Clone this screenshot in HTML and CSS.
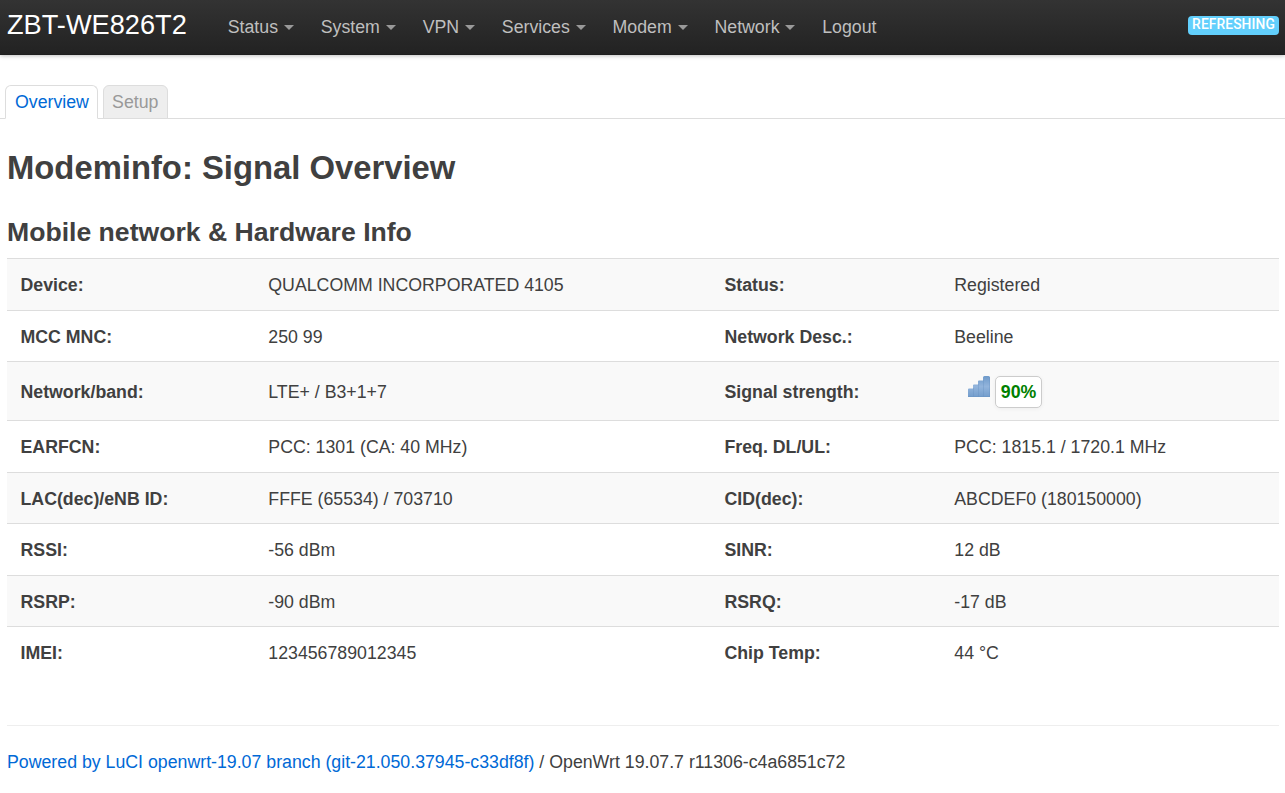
FILE: index.html
```html
<!DOCTYPE html>
<html lang="en">
<head>
<meta charset="utf-8">
<title>ZBT-WE826T2 - Modeminfo</title>
<link rel="stylesheet" href="styles.css">
</head>
<body>
<header class="topbar">
  <a class="brand">ZBT-WE826T2</a>
  <nav class="nav">
    <a class="menu">Status</a>
    <a class="menu">System</a>
    <a class="menu">VPN</a>
    <a class="menu">Services</a>
    <a class="menu">Modem</a>
    <a class="menu">Network</a>
    <a>Logout</a>
  </nav>
  <span class="label">REFRESHING</span>
</header>
<ul class="tabs">
  <li class="tab active">Overview</li>
  <li class="tab">Setup</li>
</ul>
<main class="content">
  <h2>Modeminfo: Signal Overview</h2>
  <h3>Mobile network &amp; Hardware Info</h3>
  <div class="table">
    <div class="row"><b>Device:</b><span>QUALCOMM INCORPORATED 4105</span><b>Status:</b><span>Registered</span></div>
    <div class="row short"><b>MCC MNC:</b><span>250 99</span><b>Network Desc.:</b><span>Beeline</span></div>
    <div class="row tall"><b>Network/band:</b><span>LTE+ / B3+1+7</span><b>Signal strength:</b>
      <span class="signal">
        <svg class="bars" width="22" height="21" viewBox="0 0 22 21">
          <defs><linearGradient id="bar" x1="0" y1="0" x2="0" y2="1"><stop offset="0" stop-color="#6f9aca"/><stop offset=".5" stop-color="#92b4dc"/><stop offset="1" stop-color="#739dcc"/></linearGradient></defs>
          <path d="M0 21V13.500Q0 12.500 1 12.500H5V9.500Q5 8.500 6 8.500H10V5.500Q10 4.500 11 4.500H15V1.500Q15 0 16.500 0H20.500Q22 0 22 1.500V21Z" fill="url(#bar)"/>
          <path d="M5.500 12V20.500M10.500 8V20.500M15.500 4V20.500M21.500 1V20.500M0 20.500H22" stroke="#5f8bbd" stroke-opacity=".3" fill="none"/>
        </svg>
        <strong class="badge">90%</strong>
      </span></div>
    <div class="row"><b>EARFCN:</b><span>PCC: 1301 (CA: 40 MHz)</span><b>Freq. DL/UL:</b><span>PCC: 1815.1 / 1720.1 MHz</span></div>
    <div class="row short"><b>LAC(dec)/eNB ID:</b><span>FFFE (65534) / 703710</span><b>CID(dec):</b><span>ABCDEF0 (180150000)</span></div>
    <div class="row"><b>RSSI:</b><span>-56 dBm</span><b>SINR:</b><span>12 dB</span></div>
    <div class="row short"><b>RSRP:</b><span>-90 dBm</span><b>RSRQ:</b><span>-17 dB</span></div>
    <div class="row"><b>IMEI:</b><span>123456789012345</span><b>Chip Temp:</b><span>44 °C</span></div>
  </div>
  <footer class="footer"><a>Powered by LuCI openwrt-19.07 branch (git-21.050.37945-c33df8f)</a> / OpenWrt 19.07.7 r11306-c4a6851c72</footer>
</main>
</body>
</html>
```

FILE: styles.css
```css
* { box-sizing: border-box; }
body {
  margin: 0;
  background: #fff;
  color: #404040;
  font: 17.74px/25px "Liberation Sans", Arial, sans-serif;
}
.topbar {
  display: flex;
  height: 55px;
  padding: 0 6px 0 7px;
  background: linear-gradient(#333, #222);
  box-shadow: 0 1px 4px rgba(0, 0, 0, .25), inset 0 -1px 0 rgba(0, 0, 0, .1);
}
.brand {
  width: 207px;
  padding-top: 11px;
  color: #fff;
  font-size: 27.2px;
  line-height: 28px;
}
.nav {
  display: flex;
  flex: 1;
  color: #bfbfbf;
}
.nav a { padding: 15px 13.2px 0 13.75px; }
.menu::after {
  content: "";
  display: inline-block;
  margin-left: 5.8px;
  vertical-align: 3px;
  border: 5px solid transparent;
  border-top-color: #999;
  border-bottom: 0;
}
.label {
  display: flex;
  justify-content: center;
  width: 91px;
  height: 19px;
  margin-top: 16px;
  border-radius: 4px;
  background: #62cffc;
  color: #fff;
  font: 500 13.8px/17px Roboto, "Liberation Sans", Arial, sans-serif;
  letter-spacing: .1px;
}
.tabs {
  display: flex;
  gap: 5px;
  height: 34px;
  margin: 30px 0 0;
  padding: 0 5px;
  list-style: none;
  box-shadow: inset 0 -1px #ddd;
}
.tab {
  padding: 4px 8.2px;
  border: 1px solid #ddd;
  border-radius: 6px 6px 0 0;
  background: #eee;
  color: #999;
}
.tab.active {
  padding: 4px 8px 4px 9px;
  border-bottom-color: #fff;
  background: #fff;
  color: #0069d6;
}
.content { padding: 0 6px 0 7px; }
h2 {
  margin: 24px 0 0;
  font-size: 32.8px;
  line-height: 50px;
}
h3 {
  margin: 14px 0 1px;
  font-size: 26.6px;
  line-height: 50px;
}
.row {
  display: grid;
  grid-template-columns: 247.8px 456.200px 229.8px 1fr;
  align-items: center;
  height: 52px;
  padding: 2px 0 0 13.5px;
  border-top: 1px solid #ddd;
}
.row:nth-child(odd) { background: #f9f9f9; }
.row.short { height: 51px; }
.row.tall { height: 59px; }
.signal {
  display: flex;
  gap: 5px;
  padding-left: 13.7px;
}
.bars { display: block; }
.badge {
  height: 32px;
  padding: 3px 4.800px;
  border: 1px solid #ccc;
  border-radius: 5px;
  background: #fff;
  box-shadow: 0 1px 4px rgba(0, 0, 0, .05);
  color: #008000;
}
.footer {
  margin-top: 47px;
  padding-top: 24px;
  border-top: 1px solid #eee;
}
.footer a { color: #0069d6; }
```
